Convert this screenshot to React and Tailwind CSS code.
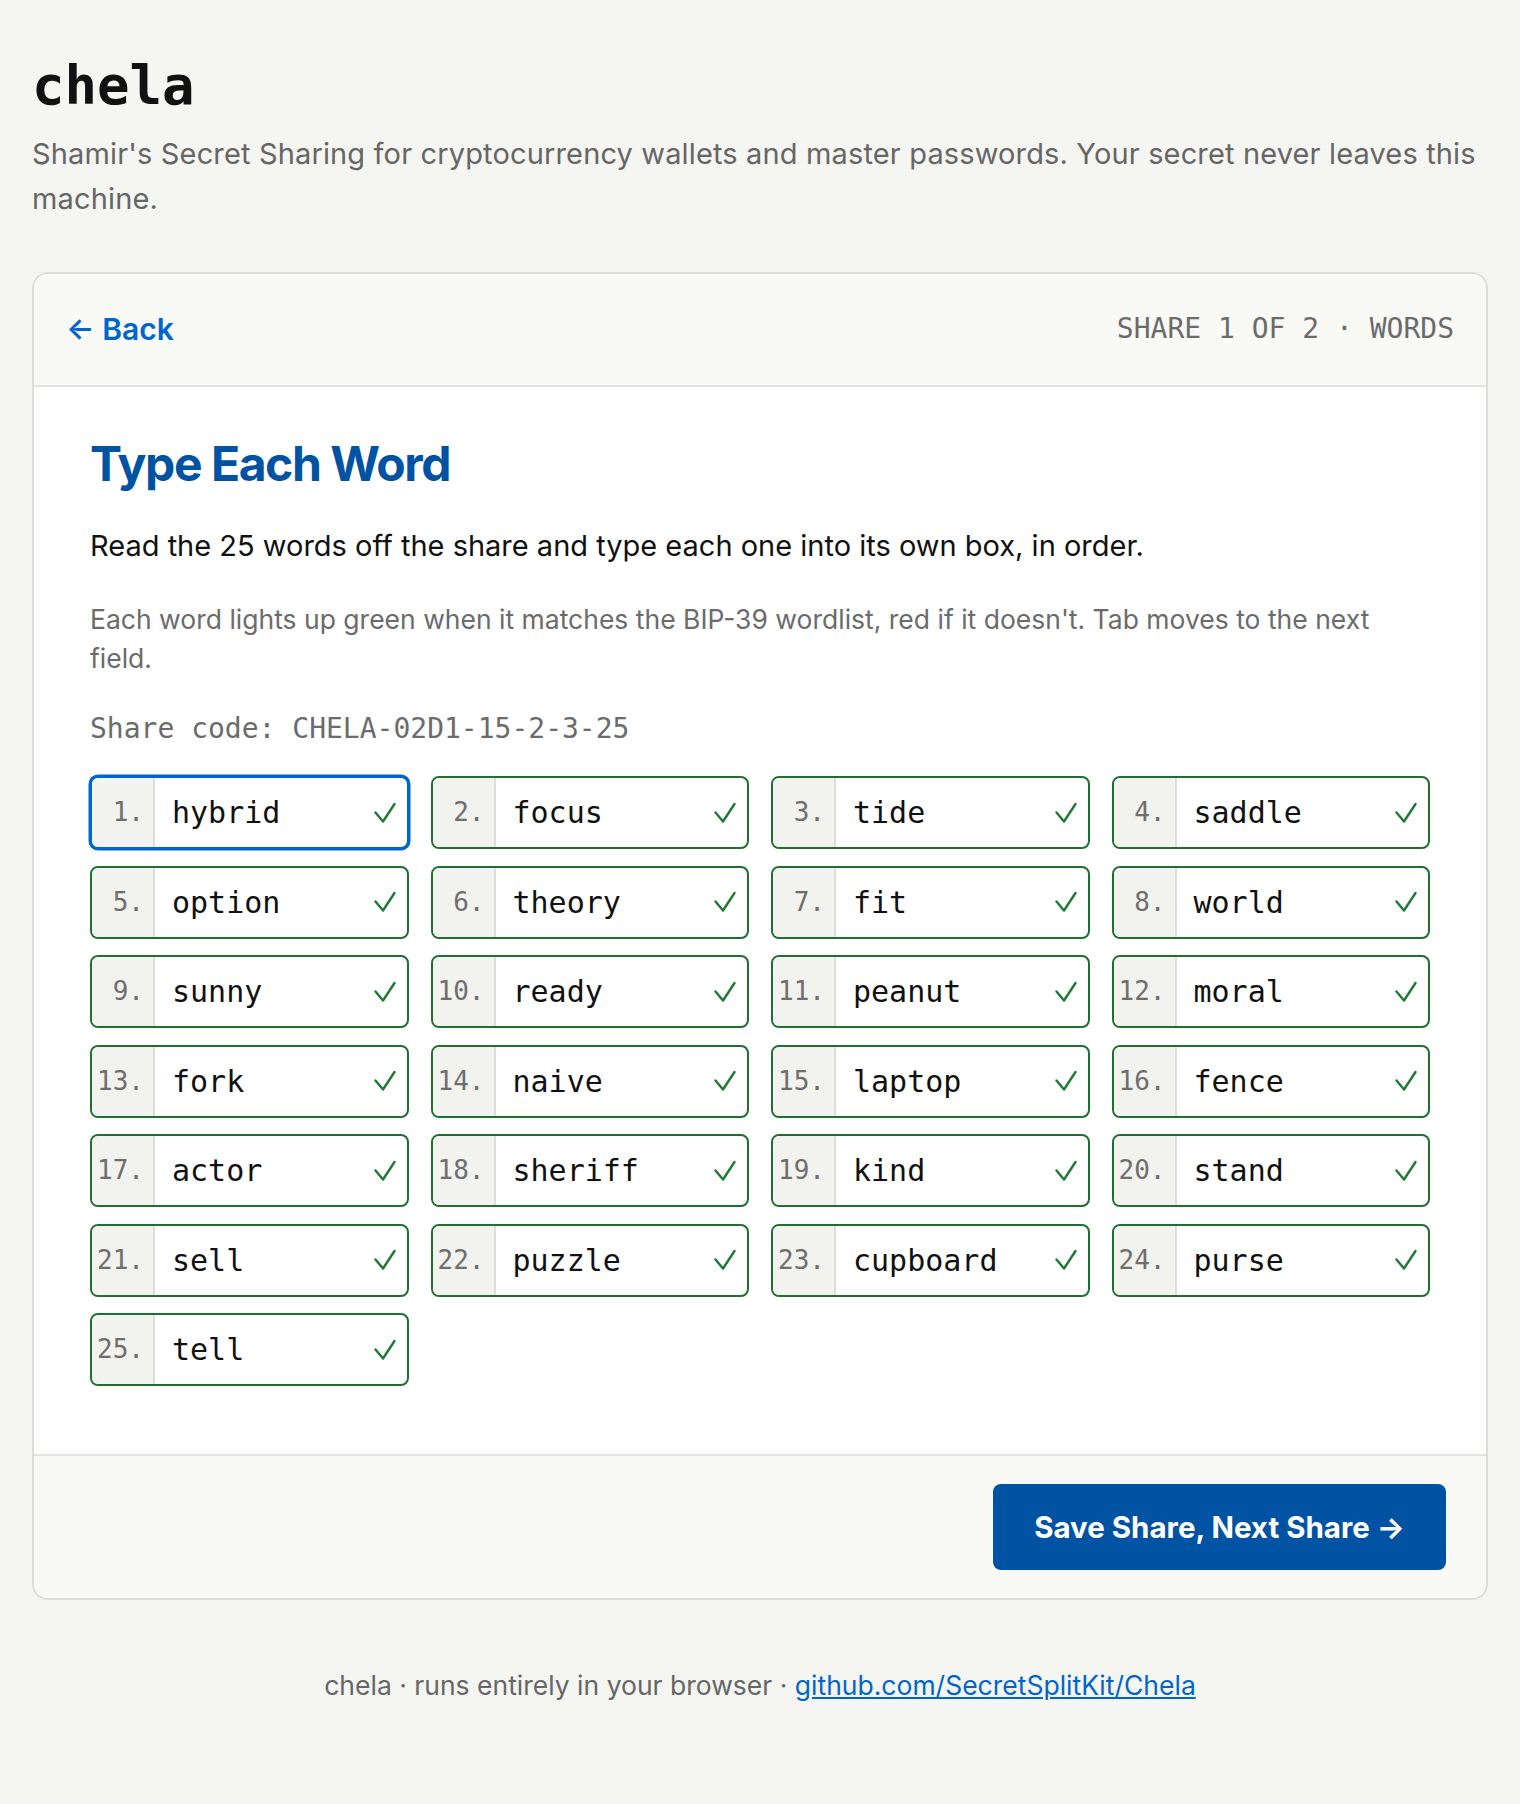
import React from "react";

const words = [
  "hybrid", "focus", "tide", "saddle",
  "option", "theory", "fit", "world",
  "sunny", "ready", "peanut", "moral",
  "fork", "naive", "laptop", "fence",
  "actor", "sheriff", "kind", "stand",
  "sell", "puzzle", "cupboard", "purse",
  "tell",
];

const sans = "font-['Inter','Noto_Sans',sans-serif]";
const mono = "font-['DejaVu_Sans_Mono','Liberation_Mono',monospace]";

function Check() {
  return (
    <svg width="22" height="22" viewBox="0 0 22 22" fill="none" className="shrink-0">
      <path d="M1.5 10.5 L9 19.5 L20.5 2" stroke="#1e7a34" strokeWidth="2.4" strokeLinecap="round" strokeLinejoin="round" />
    </svg>
  );
}

function WordField({ index, word, focused }) {
  return (
    <div
      className={
        focused
          ? "flex h-[73px] overflow-hidden rounded-lg border-2 border-[#0066cc] bg-white ring-[1.5px] ring-[#0066cc]"
          : "flex h-[73px] overflow-hidden rounded-lg border-2 border-[#1f6f30] bg-white"
      }
    >
      <div className={`flex w-[63px] shrink-0 items-center justify-end border-r-2 border-[#deded8] bg-[#f2f2ee] pr-[9px] text-[26px] text-[#6e6e6e] ${mono}`}>
        {index}.
      </div>
      <div className={`flex flex-1 items-center pl-[17px] text-[30px] text-[#111] ${mono}`}>
        {word}
      </div>
      <div className="flex items-center pr-[11px]">
        <Check />
      </div>
    </div>
  );
}

export default function App() {
  return (
    <div className={`min-h-screen bg-[#f5f5f1] px-8 pt-[53px] ${sans}`}>
      <h1 className={`text-[54px] font-bold leading-[1.24] text-[#111] ${mono}`}>chela</h1>
      <p className="mt-3 text-[29px] leading-[1.55] tracking-[0.005em] text-[#666]">
        Shamir's Secret Sharing for cryptocurrency wallets and master passwords. Your secret never leaves this machine.
      </p>

      <div className="mt-[50px] overflow-hidden rounded-2xl border-2 border-[#deded9] bg-white">
        <div className="flex h-[113px] items-center justify-between border-b-2 border-[#e2e2de] bg-[#f9f9f6] px-8">
          <a className="text-[30px] font-semibold text-[#0066cc]">← Back</a>
          <span className={`text-[28px] text-[#6b6b6b] ${mono}`}>SHARE 1 OF 2 · WORDS</span>
        </div>

        <div className="px-14 pb-[68px] pt-12">
          <h2 className="text-[48px] font-bold leading-[1.2] tracking-[-0.03em] text-[#0052a3]">Type Each Word</h2>
          <p className="mt-[32px] text-[29px] leading-[1.5] text-[#111]">
            Read the 25 words off the share and type each one into its own box, in order.
          </p>
          <p className="mt-[32px] text-[26.5px] leading-[1.48] text-[#6b6b6b]">
            Each word lights up green when it matches the BIP-39 wordlist, red if it doesn't. Tab moves to the next field.
          </p>
          <p className={`mt-[30px] text-[28px] leading-[1.5] text-[#6b6b6b] ${mono}`}>
            Share code: CHELA-02D1-15-2-3-25
          </p>

          <div className="mt-[26px] grid grid-cols-4 gap-x-[22px] gap-y-[16.5px]">
            {words.map((w, i) => (
              <WordField key={w} index={i + 1} word={w} focused={i === 0} />
            ))}
          </div>
        </div>

        <div className="flex justify-end border-t-2 border-[#e2e2de] bg-[#f9f9f6] px-10 py-7">
          <button className="h-[86px] rounded-lg bg-[#0052a3] px-[41px] text-[29.5px] font-bold text-white">
            Save Share, Next Share →
          </button>
        </div>
      </div>

      <footer className="mt-[66px] pb-[98px] text-center text-[26.5px] leading-[1.5] text-[#666]">
        chela · runs entirely in your browser ·{" "}
        <a className="text-[#0066cc] underline">github.com/SecretSplitKit/Chela</a>
      </footer>
    </div>
  );
}
